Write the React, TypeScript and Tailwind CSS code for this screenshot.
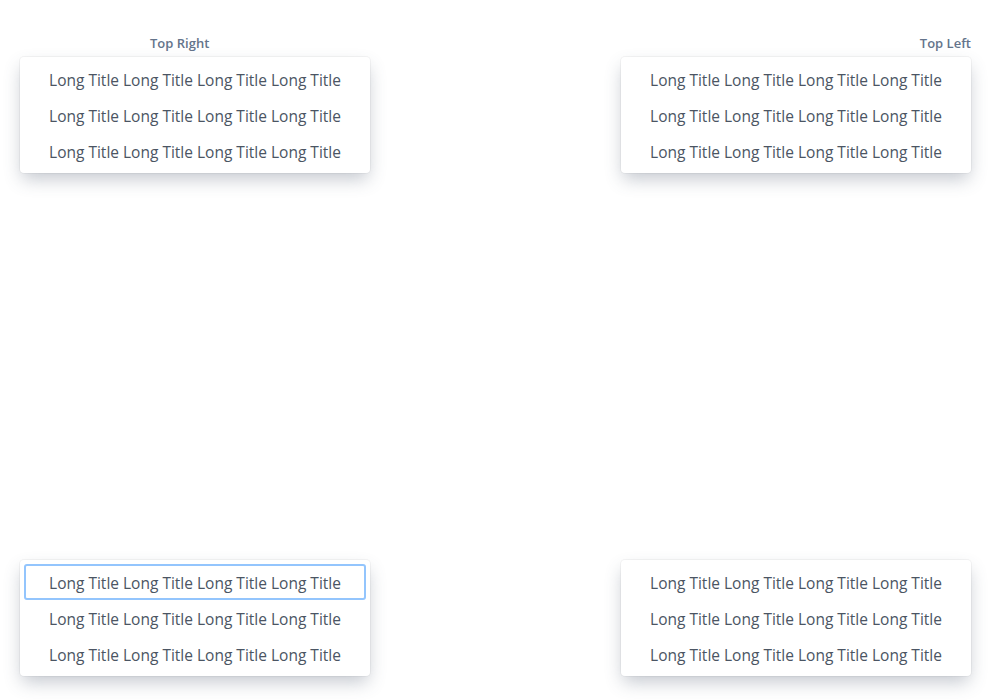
const items = ['Long Title Long Title Long Title Long Title', 'Long Title Long Title Long Title Long Title', 'Long Title Long Title Long Title Long Title']

function Menu({ focused }: { focused?: boolean }) {
  return (
    <div className="w-[350px] rounded-[4px] bg-white p-1 shadow-[0_8px_18px_-2px_rgba(71,85,105,0.32),0_0_0_1px_rgba(0,0,0,0.04)]">
      {items.map((t, i) => (
        <div
          key={i}
          className={`flex h-9 items-center justify-center rounded-[3px] pt-[3px] text-[15.5px] text-[#4b5563] ${
            focused && i === 0 ? 'border-2 border-[#93c5fd]' : ''
          }`}
        >
          {t}
        </div>
      ))}
    </div>
  )
}

export default function App() {
  return (
    <div
      className="flex h-[700px] w-full flex-col justify-between bg-white px-5 pb-6 pt-[35px]"
      style={{ fontFamily: '"Open Sans", "Noto Sans", sans-serif' }}
    >
      <div className="flex justify-between">
        <div className="flex flex-col">
          <div className="pl-[130px] text-[13px] font-semibold leading-[16px] text-[#64748b]">Top Right</div>
          <div className="mt-[6px]">
            <Menu />
          </div>
        </div>
        <div className="flex flex-col items-end">
          <div className="text-[13px] font-semibold leading-[16px] text-[#64748b]">Top Left</div>
          <div className="mt-[6px]">
            <Menu />
          </div>
        </div>
      </div>
      <div className="flex justify-between">
        <Menu focused />
        <Menu />
      </div>
    </div>
  )
}
